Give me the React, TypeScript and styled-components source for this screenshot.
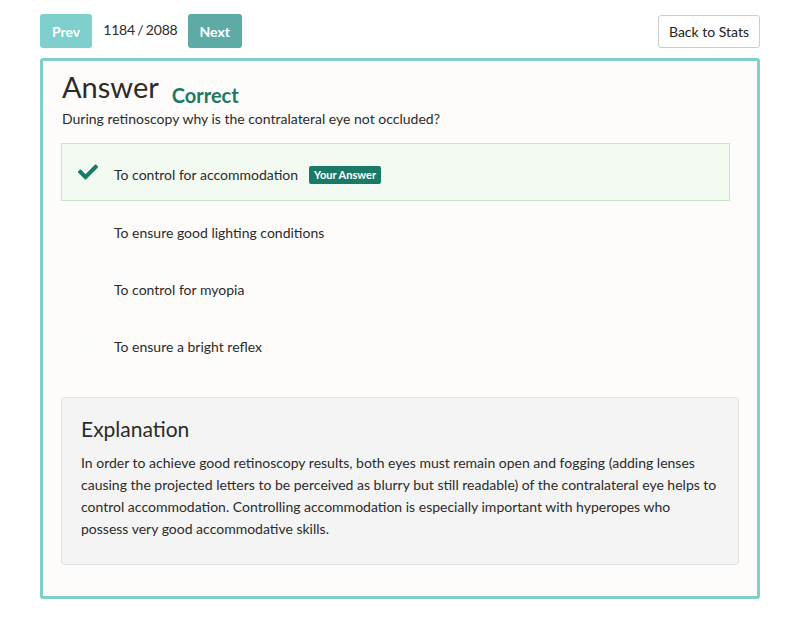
import React from "react";
import styled, { createGlobalStyle } from "styled-components";
import { FaCheck } from "react-icons/fa";

const Global = createGlobalStyle`
  body { margin: 0; background: #ffffff; font-family: Lato, "Open Sans", sans-serif; color: #2b2b2b; }
`;

const Page = styled.div`
  padding: 14px 40px 0 40px;
`;

const TopBar = styled.div`
  display: flex;
  align-items: center;
  height: 34px;
`;

const NavButton = styled.button<{ $dark?: boolean }>`
  height: 34px;
  padding: 0 12px;
  border: none;
  border-radius: 3px;
  background: ${(p) => (p.$dark ? "#5eaba6" : "#7fcfcc")};
  color: #ffffff;
  font-family: Lato, sans-serif;
  font-weight: 700;
  font-size: 14px;
`;

const Counter = styled.span`
  font-size: 14px;
  letter-spacing: -0.2px;
  word-spacing: -1px;
  color: #2b2b2b;
  margin: 0 10px 0 11px;
  position: relative;
  top: -2px;
`;

const Spacer = styled.div`
  flex: 1;
`;

const BackButton = styled.button`
  height: 33px;
  padding: 0 10px;
  background: #ffffff;
  border: 1px solid #cccccc;
  border-radius: 3px;
  font-family: Lato, sans-serif;
  font-size: 14px;
  color: #222;
`;

const Card = styled.div`
  margin-top: 10px;
  border: 3px solid #7fcfcc;
  border-radius: 3px;
  background: #fdfcfa;
  padding: 8px 18px 31px 18px;
`;

const HeadingRow = styled.div`
  display: flex;
  align-items: baseline;
  padding-left: 1px;
`;

const Title = styled.h1`
  margin: 0;
  font-size: 29px;
  font-weight: 400;
  color: #2b2b2b;
  line-height: 36px;
`;

const Status = styled.span`
  margin-left: 13px;
  font-size: 20px;
  font-weight: 700;
  color: #1a7a66;
  position: relative;
  top: 5px;
`;

const Question = styled.p`
  margin: 4px 0 14px 1px;
  font-size: 14px;
  line-height: 20px;
`;

const Options = styled.div`
  width: 669px;
  display: flex;
  flex-direction: column;
`;

const Option = styled.div<{ $selected?: boolean }>`
  display: flex;
  align-items: center;
  height: ${(p) => (p.$selected ? "58px" : "57px")};
  box-sizing: border-box;
  padding: 5px 0 0 16px;
  background: ${(p) => (p.$selected ? "#f3faf1" : "transparent")};
  border: 1px solid ${(p) => (p.$selected ? "#c9e5c4" : "transparent")};
  font-size: 14px;
  color: #2b2b2b;
`;

const CheckBox = styled.span<{ $on?: boolean }>`
  width: 22px;
  margin-right: 14px;
  display: flex;
  align-items: center;
  position: relative;
  top: -3px;
  color: ${(p) => (p.$on ? "#1a7a66" : "#fbfbf9")};
  font-size: 20px;
`;

const Badge = styled.span`
  margin-left: 11px;
  background: #1a7a66;
  color: #ffffff;
  font-size: 11px;
  font-weight: 700;
  padding: 3px 5px;
  border-radius: 2px;
  line-height: 12px;
`;

const Explanation = styled.div`
  margin-top: 25px;
  background: #f4f4f4;
  border: 1px solid #e2e2e2;
  border-radius: 4px;
  padding: 18px 19px 24px 19px;
`;

const ExplTitle = styled.h2`
  margin: 0 0 10px 0;
  font-size: 21px;
  font-weight: 400;
  line-height: 26px;
  color: #2b2b2b;
`;

const ExplText = styled.p`
  margin: 0;
  font-size: 14px;
  line-height: 22px;
  color: #2b2b2b;
`;

const options = [
  { text: "To control for accommodation", selected: true },
  { text: "To ensure good lighting conditions" },
  { text: "To control for myopia" },
  { text: "To ensure a bright reflex" },
];

export default function App() {
  return (
    <>
      <Global />
      <Page>
        <TopBar>
          <NavButton>Prev</NavButton>
          <Counter>1184 / 2088</Counter>
          <NavButton $dark>Next</NavButton>
          <Spacer />
          <BackButton>Back to Stats</BackButton>
        </TopBar>
        <Card>
          <HeadingRow>
            <Title>Answer</Title>
            <Status>Correct</Status>
          </HeadingRow>
          <Question>During retinoscopy why is the contralateral eye not occluded?</Question>
          <Options>
            {options.map((o) => (
              <Option key={o.text} $selected={o.selected}>
                <CheckBox $on={o.selected}>
                  <FaCheck />
                </CheckBox>
                {o.text}
                {o.selected && <Badge>Your Answer</Badge>}
              </Option>
            ))}
          </Options>
          <Explanation>
            <ExplTitle>Explanation</ExplTitle>
            <ExplText>
              In order to achieve good retinoscopy results, both eyes must remain open and fogging (adding lenses
              causing the projected letters to be perceived as blurry but still readable) of the contralateral eye helps
              to control accommodation. Controlling accommodation is especially important with hyperopes who
              possess very good accommodative skills.
            </ExplText>
          </Explanation>
        </Card>
      </Page>
    </>
  );
}
